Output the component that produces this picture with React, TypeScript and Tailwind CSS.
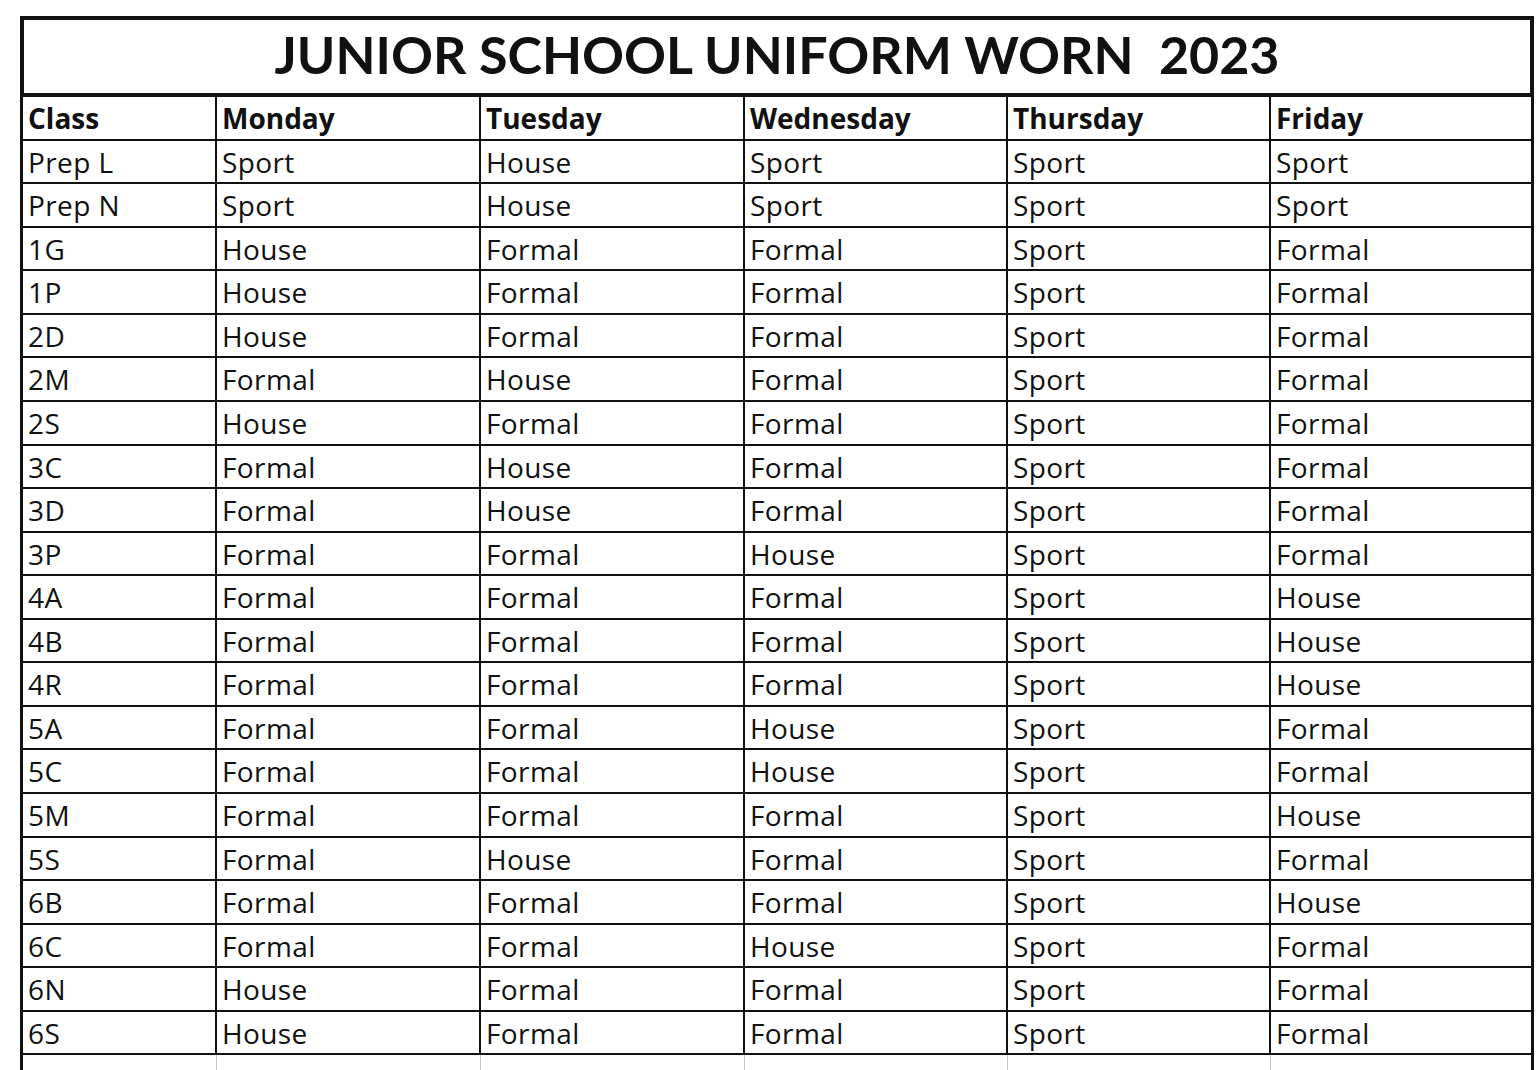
const rows: [string, string, string, string, string, string][] = [
  ['Prep L', 'Sport', 'House', 'Sport', 'Sport', 'Sport'],
  ['Prep N', 'Sport', 'House', 'Sport', 'Sport', 'Sport'],
  ['1G', 'House', 'Formal', 'Formal', 'Sport', 'Formal'],
  ['1P', 'House', 'Formal', 'Formal', 'Sport', 'Formal'],
  ['2D', 'House', 'Formal', 'Formal', 'Sport', 'Formal'],
  ['2M', 'Formal', 'House', 'Formal', 'Sport', 'Formal'],
  ['2S', 'House', 'Formal', 'Formal', 'Sport', 'Formal'],
  ['3C', 'Formal', 'House', 'Formal', 'Sport', 'Formal'],
  ['3D', 'Formal', 'House', 'Formal', 'Sport', 'Formal'],
  ['3P', 'Formal', 'Formal', 'House', 'Sport', 'Formal'],
  ['4A', 'Formal', 'Formal', 'Formal', 'Sport', 'House'],
  ['4B', 'Formal', 'Formal', 'Formal', 'Sport', 'House'],
  ['4R', 'Formal', 'Formal', 'Formal', 'Sport', 'House'],
  ['5A', 'Formal', 'Formal', 'House', 'Sport', 'Formal'],
  ['5C', 'Formal', 'Formal', 'House', 'Sport', 'Formal'],
  ['5M', 'Formal', 'Formal', 'Formal', 'Sport', 'House'],
  ['5S', 'Formal', 'House', 'Formal', 'Sport', 'Formal'],
  ['6B', 'Formal', 'Formal', 'Formal', 'Sport', 'House'],
  ['6C', 'Formal', 'Formal', 'House', 'Sport', 'Formal'],
  ['6N', 'House', 'Formal', 'Formal', 'Sport', 'Formal'],
  ['6S', 'House', 'Formal', 'Formal', 'Sport', 'Formal'],
];

const header = ['Class', 'Monday', 'Tuesday', 'Wednesday', 'Thursday', 'Friday'];

const gridCols = 'grid grid-cols-[194px_264px_264px_263px_263px_260px]';

const Row = ({ cells, bold }: { cells: string[]; bold?: boolean }) => (
  <div className={`${gridCols} h-[43.57px] border-b-2 border-[#111]`}>
    {cells.map((c, i) => (
      <div
        key={i}
        className={`pl-[5px] pt-[7px] text-[28px] leading-none text-[#111] whitespace-nowrap overflow-hidden ${
          bold ? 'font-bold' : 'tracking-[0.4px]'
        } ${i < 5 ? 'border-r-2 border-[#111]' : ''}`}
      >
        {c}
      </div>
    ))}
  </div>
);

export default function App() {
  return (
    <div className="min-h-screen bg-white pt-[16px] pl-[20px]" style={{ fontFamily: '"Open Sans", Lato, sans-serif' }}>
      <div className="w-[1514px]">
        <div className="h-[81px] border-4 border-[#111] flex justify-center pt-[8px]">
          <span className="font-['Lato'] text-[52px] leading-none font-bold text-[#111] whitespace-pre">
            JUNIOR SCHOOL UNIFORM WORN  2023
          </span>
        </div>
        <div className="border-x-[3px] border-[#111]">
          <Row cells={header} bold />
          {rows.map((r) => (
            <Row key={r[0]} cells={r} />
          ))}
          <div className={`${gridCols} h-[40px]`}>
            {[0, 1, 2, 3, 4, 5].map((i) => (
              <div key={i} className={i < 5 ? 'border-r border-[#c8c8c8]' : ''} />
            ))}
          </div>
        </div>
      </div>
    </div>
  );
}
